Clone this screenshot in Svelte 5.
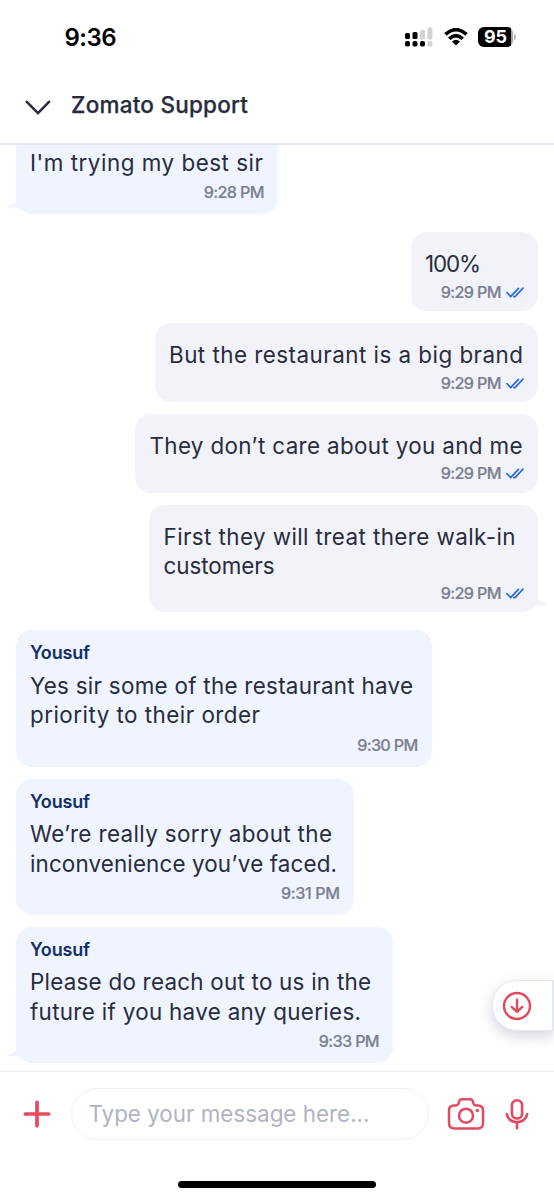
<script>
  const messages = [
    { side: 'in', first: true, lines: [["I'm trying my best sir", 233]], time: '9:28 PM', width: 262, height: 80, tail: true },
    { side: 'out', group: true, lines: [['100%', 56]], time: '9:29 PM', width: 127.5, height: 79 },
    { side: 'out', lines: [['But the restaurant is a big brand', 354]], time: '9:29 PM', width: 383.5, height: 79 },
    { side: 'out', lines: [['They don’t care about you and me', 373]], time: '9:29 PM', width: 403, height: 79 },
    { side: 'out', lines: [['First they will treat there walk-in', 352], ['customers', 111]], time: '9:29 PM', width: 389, height: 107.5, tail: true },
    { side: 'in', group: true, name: 'Yousuf', lines: [['Yes sir some of the restaurant have', 383], ['priority to their order', 230]], time: '9:30 PM', width: 415.5, height: 137 },
    { side: 'in', name: 'Yousuf', lines: [['We’re really sorry about the', 302], ['inconvenience you’ve faced.', 307]], time: '9:31 PM', width: 337.5, height: 136.3 },
    { side: 'in', name: 'Yousuf', lines: [['Please do reach out to us in the', 341], ['future if you have any queries.', 331]], time: '9:33 PM', width: 377, height: 136.3, tail: true }
  ];

  // Spreads the letters so that a line takes the given width.
  function track(node, width) {
    const natural = node.getBoundingClientRect().width;
    const count = node.textContent.length;
    node.style.letterSpacing = `${(width - natural) / (count - 1)}px`;
  }
</script>

<div class="screen">
  <div class="status">
    <span class="clock"><span use:track={52}>9:36</span></span>
    <div class="indicators">
      <svg width="28" height="20" viewBox="0 0 28 20">
        <g fill="#000">
          <rect x="0" y="6" width="5" height="6" rx="1.6" /><rect x="7.5" y="5" width="5" height="7" rx="1.6" />
          <rect x="0" y="14" width="5" height="5.5" rx="1.8" /><rect x="7.5" y="14" width="5" height="5.5" rx="1.8" /><rect x="15" y="14" width="5" height="5.5" rx="1.8" />
        </g>
        <g fill="#d2d2d2">
          <rect x="15" y="3" width="5" height="9.5" rx="1.6" /><rect x="22.5" y="0.5" width="5" height="12" rx="1.6" /><rect x="22.5" y="14" width="5" height="5.5" rx="1.8" />
        </g>
      </svg>
      <svg class="wifi" width="24" height="18" viewBox="0 0 24 18">
        <g fill="none" stroke="#000" stroke-width="3.5">
          <path d="M1.4 6.4Q12-3.1 22.6 6.4" /><path d="M5.2 10.7Q12 4.6 18.8 10.7" />
        </g>
        <path d="M8 13.4Q12 10 16 13.4L12 17.5Z" fill="#000" />
      </svg>
      <div class="battery"><span use:track={23}>95</span></div>
      <i class="nub"></i>
    </div>
  </div>

  <header>
    <svg width="26" height="16" viewBox="0 0 26 16"><path d="M1.8 1.8 13 13.2 24 1.8" fill="none" stroke="#2b2d40" stroke-width="2.6" stroke-linecap="round" stroke-linejoin="round" /></svg>
    <h1><span use:track={177}>Zomato Support</span></h1>
  </header>

  <main>
    {#each messages as m}
      <div class="bubble {m.side}" class:group={m.group} class:first={m.first} style="width:{m.width}px;height:{m.height}px">
        {#if m.name}<div class="name"><span use:track={60}>{m.name}</span></div>{/if}
        <div class="text">
          {#each m.lines as [line, width]}
            <div><span use:track={width}>{line}</span></div>
          {/each}
        </div>
        <div class="meta">
          <span use:track={m.time === '9:31 PM' ? 59 : 61}>{m.time}</span>
          {#if m.side === 'out'}
            <svg width="18" height="11" viewBox="0 0 18 11"><path d="M1 5.7 4.7 9.6 12.4 1.4M7.8 9.6 9 9.6 17 1.2" fill="none" stroke="#2c68df" stroke-width="1.7" stroke-linecap="round" stroke-linejoin="round" /></svg>
          {/if}
        </div>
        {#if m.tail}
          <svg class="tail" width="24" height="16" viewBox="0 0 24 16"><path d="M8.5 0V3.5Q5 6 .5 7.4Q-.5 8.6 1 9.4H11Q15 14 23 14.5V0Z" fill="currentColor" /></svg>
        {/if}
      </div>
    {/each}
    <button class="jump" aria-label="Scroll down">
      <svg width="30" height="30" viewBox="0 0 30 30" fill="none" stroke="#e14a5d" stroke-width="2.4" stroke-linecap="round" stroke-linejoin="round"><circle cx="15" cy="15" r="13" /><path d="M15 8.8V20.8M9.7 15.9 15 21 20.3 15.9" /></svg>
    </button>
  </main>

  <footer>
    <svg class="plus" width="28" height="28" viewBox="0 0 28 28"><path d="M14 2.3V25.7M2.3 14H25.7" stroke="#e84a60" stroke-width="3.7" stroke-linecap="round" /></svg>
    <div class="input"><span use:track={281}>Type your message here...</span></div>
    <svg class="camera" width="38" height="34" viewBox="0 0 38 34" fill="none" stroke="#e14a60" stroke-width="2.5" stroke-linecap="round" stroke-linejoin="round">
      <path d="M7 8.5H8.6Q11 8.5 11.7 6L12.1 4.4Q12.8 2.2 15 2.2H23Q25.2 2.2 25.9 4.4L26.3 6Q27 8.5 29.4 8.5H31Q36 8.5 36 13.5V26Q36 31.5 30.5 31.5H7.5Q2 31.5 2 26V13.5Q2 8.5 7 8.5Z" />
      <circle cx="19" cy="18.7" r="7" /><circle cx="30.3" cy="13.5" r="1.7" fill="#e14a60" stroke="none" />
    </svg>
    <svg class="mic" width="24" height="32" viewBox="0 0 24 32" fill="none" stroke="#e14a60" stroke-width="2.6" stroke-linecap="round">
      <rect x="6.9" y="2.2" width="10.2" height="18.3" rx="5.1" /><path d="M1.8 16C3 21.5 7 24 12 24S21 21.5 22.2 16M12 24V30.3" />
    </svg>
  </footer>
  <div class="home"><i></i></div>
</div>

<style>
  :global(body) { margin: 0; background: #fff; }
  .screen { width: 554px; height: 1200px; display: flex; flex-direction: column; background: #fff; overflow: hidden; font-family: Inter, "Open Sans", sans-serif; color: #282c3f; box-sizing: border-box; }
  span { white-space: nowrap; }
  svg { display: block; flex: none; }
  .status { height: 74px; flex: none; display: flex; justify-content: space-between; align-items: center; padding: 0 38px 0 64.5px; box-sizing: border-box; }
  .clock { font-size: 24px; font-weight: 600; color: #000; }
  .indicators { display: flex; align-items: center; }
  .wifi { margin-left: 11px; }
  .battery { width: 35px; height: 20px; margin-left: 10px; border-radius: 6px; background: linear-gradient(90deg, #000 33px, #aaa 33px); color: #fff; font-size: 18px; font-weight: 700; line-height: 20px; padding-left: 6px; box-sizing: border-box; }
  .nub { width: 2px; height: 6px; margin-left: 1px; border-radius: 0 2px 2px 0; background: #bbb; }
  header { height: 71px; flex: none; box-sizing: border-box; border-bottom: 2px solid #e5e6ee; display: flex; align-items: center; padding: 0 26px 7px 25px; gap: 20px; }
  header svg { margin-top: 5px; }
  h1 { margin: 0; font-size: 22.5px; line-height: 30px; font-weight: 500; -webkit-text-stroke: .25px; }
  main { height: 926px; flex: none; position: relative; overflow: hidden; display: flex; flex-direction: column; justify-content: flex-end; gap: 11.8px; padding: 0 16px 8px; box-sizing: border-box; }
  .bubble { position: relative; flex: none; box-sizing: border-box; border-radius: 16px; padding: 0 14px; display: flex; flex-direction: column; }
  .in { background: #eff4ff; color: #eff4ff; align-self: flex-start; padding-top: 12.5px; padding-bottom: 12px; }
  .out { background: #f2f3f8; color: #f2f3f8; align-self: flex-end; padding: 17.3px 14px 9.3px 14.5px; }
  .group { margin-top: 6px; }
  .first { padding-top: 13.5px; }
  .name { color: #122e68; font-size: 18px; line-height: 22px; font-weight: 600; margin-bottom: 6.2px; }
  .text { color: #282c3f; font-size: 22.4px; line-height: 29.2px; }
  .meta { margin-top: auto; display: flex; justify-content: flex-end; align-items: center; gap: 5px; font-size: 16.2px; line-height: 19px; font-weight: 500; color: #7b7f91; -webkit-text-stroke: .2px; }
  .tail { position: absolute; bottom: 0; left: -8px; }
  .out .tail { left: auto; right: -8px; transform: scaleX(-1); }
  .jump { position: absolute; right: 0; top: 835px; width: 62px; height: 51px; box-sizing: border-box; border: 1.5px solid #e6e8f1; border-right-width: 2px; border-radius: 25px 0 0 25px; background: #fff; box-shadow: 0 5px 14px rgba(40, 44, 90, .2); padding: 0 0 0 8.5px; display: flex; align-items: center; }
  footer { height: 87px; flex: none; box-sizing: border-box; border-top: 1.5px solid #e8ebf5; display: flex; align-items: center; padding: 0 24px 2px 23px; }
  .input { width: 358px; height: 52px; margin-left: 20px; border: 1.5px solid #f0f1f6; border-radius: 26px; box-sizing: border-box; padding-left: 16.5px; font-size: 22.4px; line-height: 50px; color: #b0b3c3; }
  .camera { margin-left: 18px; }
  .mic { margin-left: 20px; }
  .home { flex: 1; display: flex; justify-content: center; align-items: flex-start; }
  .home i { width: 198px; height: 7px; border-radius: 4px; background: #000; margin-top: 23px; }
</style>
